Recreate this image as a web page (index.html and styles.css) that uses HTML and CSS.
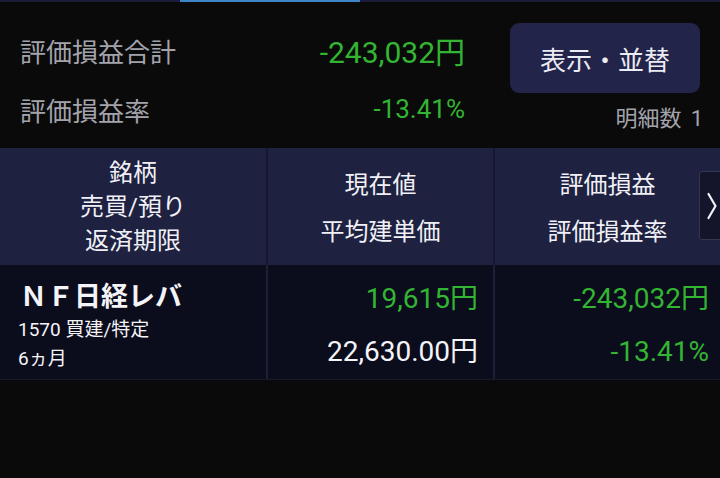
FILE: index.html
```html
<!DOCTYPE html>
<html lang="ja">
<head>
<meta charset="utf-8">
<title>評価損益</title>
<link rel="stylesheet" href="styles.css">
</head>
<body>
<div class="page">
  <div class="topbar"><div class="tab-indicator"></div></div>
  <section class="summary">
    <div class="totals">
      <div class="total-row row-main">
        <span class="label">評価損益合計</span>
        <span class="value value-big">-243,032円</span>
      </div>
      <div class="total-row row-rate">
        <span class="label">評価損益率</span>
        <span class="value value-rate">-13.41%</span>
      </div>
    </div>
    <div class="side">
      <button class="sort-btn">表示・並替</button>
      <div class="count">明細数<span class="count-num">1</span></div>
    </div>
  </section>
  <section class="table">
    <div class="thead">
      <div class="cell col1 h-three">
        <div>銘柄</div>
        <div>売買/預り</div>
        <div>返済期限</div>
      </div>
      <div class="cell col2 h-two">
        <div>現在値</div>
        <div>平均建単価</div>
      </div>
      <div class="cell col3 h-two">
        <div>評価損益</div>
        <div>評価損益率</div>
      </div>
      <div class="next-btn">
        <svg width="12" height="28" viewBox="0 0 12 28"><polyline points="2.5,2 9.5,14 2.5,26" fill="none" stroke="#f2f2f7" stroke-width="2.2" stroke-linecap="round" stroke-linejoin="round"/></svg>
      </div>
    </div>
    <div class="trow">
      <div class="cell col1 d-name">
        <div class="name">ＮＦ日経レバ</div>
        <div class="sub">1570 買建/特定</div>
        <div class="sub">6ヵ月</div>
      </div>
      <div class="cell col2 d-num">
        <div class="green">19,615円</div>
        <div class="white">22,630.00円</div>
      </div>
      <div class="cell col3 d-num d-last">
        <div class="green">-243,032円</div>
        <div class="green">-13.41%</div>
      </div>
    </div>
  </section>
</div>
</body>
</html>
```
FILE: styles.css
```css
html, body {
  margin: 0;
  padding: 0;
  background: #0a0a0b;
}
body {
  font-family: Roboto, "Noto Sans CJK JP", sans-serif;
  width: 720px;
  height: 478px;
  overflow: hidden;
}
.page {
  width: 720px;
  height: 478px;
  background: #0a0a0b;
}
.topbar {
  height: 2px;
  background: #1b1d3a;
  display: flex;
  padding-left: 180px;
}
.tab-indicator {
  width: 180px;
  height: 2px;
  background: #3b85c8;
}
.summary {
  height: 146px;
  display: flex;
}
.totals {
  width: 445px;
  margin-left: 20px;
  padding-top: 18px;
  display: flex;
  flex-direction: column;
}
.total-row {
  display: flex;
  justify-content: space-between;
  align-items: center;
}
.row-main { height: 60px; }
.row-rate { height: 58px; }
.label {
  color: #a3a3ab;
  font-size: 26px;
}
.value {
  color: #33b533;
}
.value-big { font-size: 30px; }
.value-rate { font-size: 26px; }
.side {
  margin-left: 45px;
  width: 190px;
  padding-top: 21px;
  display: flex;
  flex-direction: column;
}
.sort-btn {
  height: 70px;
  width: 190px;
  border: none;
  border-radius: 9px;
  background: #22244a;
  color: #ececf4;
  font-family: Roboto, "Noto Sans CJK JP", sans-serif;
  font-size: 26px;
  padding: 0;
}
.count {
  margin-top: 11px;
  height: 30px;
  line-height: 30px;
  text-align: right;
  margin-right: -3px;
  color: #a3a3ab;
  font-size: 22px;
}
.count-num {
  margin-left: 9px;
}
.table {
  width: 720px;
}
.thead {
  position: relative;
  height: 117px;
  background: #1e2140;
  display: flex;
  color: #f0f0f6;
  font-size: 24px;
}
.cell {
  box-sizing: border-box;
}
.col1 { width: 268px; border-right: 2px solid #161831; }
.col2 { width: 227px; border-right: 2px solid #161831; }
.col3 { flex: 1; }
.h-three {
  padding-top: 8px;
  line-height: 34px;
  text-align: center;
}
.h-two {
  padding-top: 14px;
  line-height: 47px;
  text-align: center;
}
.next-btn {
  position: absolute;
  left: 699px;
  top: 23px;
  width: 30px;
  height: 69px;
  box-sizing: border-box;
  background: #14152a;
  border: 1px solid #34364f;
  border-radius: 3px;
  padding-left: 6px;
  display: flex;
  align-items: center;
}
.trow {
  height: 114px;
  background: #0b0c1c;
  display: flex;
  border-bottom: 1px solid #181a2c;
}
.trow .col1, .trow .col2 { border-right-color: #1d2039; }
.d-name {
  padding-left: 20px;
  padding-top: 14px;
  color: #f4f4f8;
}
.name {
  font-size: 27px;
  font-weight: bold;
  line-height: 36px;
}
.sub {
  font-size: 19px;
  line-height: 29px;
  margin-left: -2px;
}
.d-num {
  padding-top: 7px;
  padding-right: 15px;
  text-align: right;
  font-size: 28px;
  line-height: 53px;
}
.d-last { padding-right: 11px; }
.green { color: #33b533; }
.white { color: #f4f4f8; }
```
